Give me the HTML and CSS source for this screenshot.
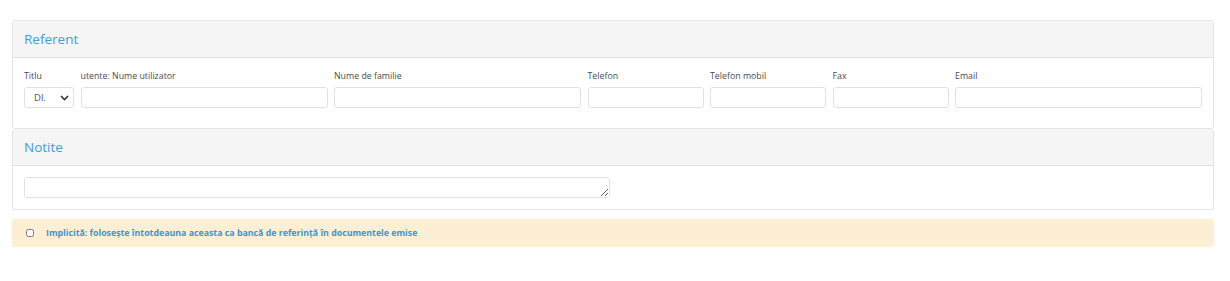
FILE: index.html
```html
<html>
<head>
    <title>Referent</title>
    <meta charset="UTF-8">
    <meta name="viewport" content="width=device-width, initial-scale=1.0">
    <link rel="stylesheet" href="styles.css">
</head>
<body>
  <div class="page">
    <div class="panel">
      <div class="panel-heading">Referent</div>
      <div class="panel-body">
        <div class="contact-row">
          <div class="field">
            <label>Titlu</label>
            <div class="select">
              <span>Dl.</span>
              <svg width="9" height="6" viewBox="0 0 9 6"><path d="M1 1 L4.5 4.5 L8 1" fill="none" stroke="#333" stroke-width="1.6"/></svg>
            </div>
          </div>
          <div class="field">
            <label>utente: Nume utilizator</label>
            <input type="text">
          </div>
          <div class="field">
            <label>Nume de familie</label>
            <input type="text">
          </div>
          <div class="field">
            <label>Telefon</label>
            <input type="text">
          </div>
          <div class="field">
            <label>Telefon mobil</label>
            <input type="text">
          </div>
          <div class="field">
            <label>Fax</label>
            <input type="text">
          </div>
          <div class="field">
            <label>Email</label>
            <input type="text">
          </div>
        </div>
      </div>
    </div>

    <div class="panel">
      <div class="panel-heading">Notite</div>
      <div class="panel-body notes-body">
        <textarea class="notes" rows="1"></textarea>
      </div>
    </div>

    <div class="alert">
      <input type="checkbox" class="check">
      <span>Implicită: folosește întotdeauna aceasta ca bancă de referință în documentele emise</span>
    </div>
  </div>
</body>
</html>
```

FILE: styles.css
```css
 body {
     margin: 0;
     font-family: "Open Sans", "Noto Sans", sans-serif;
     color: #333;
     background-color: white;
 }

 .page {
     padding: 20px 16px 0 12px;
 }

 .panel {
     border: 1px solid #e4e4e4;
     border-radius: 3px;
     background-color: white;
 }

 .panel + .panel {
     border-top: none;
 }

 .panel-heading {
     background-color: #f5f5f5;
     border-bottom: 1px solid #e0e0e0;
     color: #3d9ee0;
     font-size: 13.5px;
     height: 36px;
     line-height: 36px;
     padding: 0 11px;
 }

 .panel-body {
     padding: 12px 11px 20px 11px;
 }

 .notes-body {
     padding: 11px 11px 11px 11px;
 }

 .contact-row {
     display: grid;
     grid-template-columns: 50px 247fr 247fr 116fr 116fr 116fr 247fr;
     gap: 6.5px;
 }

 .field label {
     display: block;
     font-size: 8.8px;
     color: #4a4a4a;
     height: 12px;
     line-height: 12px;
     margin-bottom: 5px;
 }

 .field input,
 .select {
     box-sizing: border-box;
     width: 100%;
     height: 21px;
     border: 1px solid #dfe2e6;
     border-radius: 3px;
     background-color: white;
     margin: 0;
     outline: none;
 }

 .select {
     display: flex;
     align-items: center;
     justify-content: space-between;
     padding: 0 4px 0 9px;
     font-size: 9.5px;
     color: #555;
 }

 .notes {
     display: block;
     box-sizing: border-box;
     width: 586px;
     height: 21px;
     border: 1px solid #dfe2e6;
     border-radius: 3px;
     margin: 0;
     resize: both;
 }

 .alert {
     margin-top: 9px;
     background-color: #fcefd3;
     border-radius: 3px;
     height: 28px;
     display: flex;
     align-items: center;
     padding-left: 12px;
     font-size: 8.8px;
     font-weight: bold;
     color: #3a96d6;
 }

 .check {
     width: 8px;
     height: 8px;
     margin: 0 12px 0 2px;
 }
```
